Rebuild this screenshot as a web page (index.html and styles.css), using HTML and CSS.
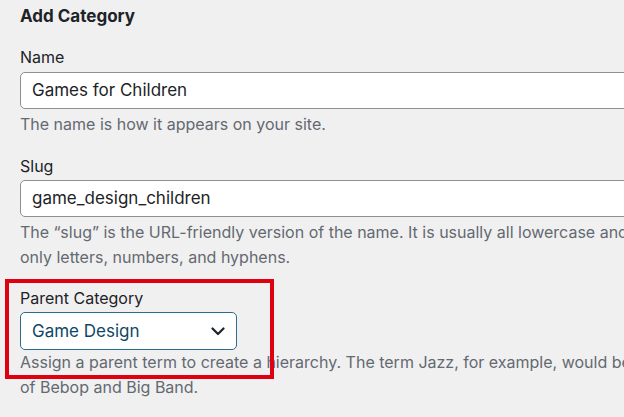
FILE: index.html
```
<!DOCTYPE html>
<html lang="en">
<head>
<meta charset="utf-8">
<title>Add Category</title>
<link rel="stylesheet" href="styles.css">
</head>
<body>
<div class="form">
  <h2 class="title">Add Category</h2>
  <div class="field field-name">
    <div class="label">Name</div>
    <div class="input">Games for Children</div>
    <p class="help">The name is how it appears on your site.</p>
  </div>
  <div class="field field-slug">
    <div class="label">Slug</div>
    <div class="input">game_design_children</div>
    <p class="help">The “slug” is the URL-friendly version of the name. It is usually all lowercase and contains only letters, numbers, and hyphens.</p>
  </div>
  <div class="field field-parent">
    <div class="highlight"></div>
    <div class="label">Parent Category</div>
    <div class="select">
      <span class="select-value">Game Design</span>
      <svg class="chevron" width="14" height="9" viewBox="0 0 14 9"><polyline points="1.5,1.5 7,7 12.5,1.5" fill="none" stroke="#1d2327" stroke-width="2.2" stroke-linecap="round" stroke-linejoin="round"/></svg>
    </div>
    <p class="help">Assign a parent term to create a hierarchy. The term Jazz, for example, would be the parent of Bebop and Big Band.</p>
  </div>
</div>
</body>
</html>
```
FILE: styles.css
```
html, body {
  margin: 0;
  padding: 0;
  overflow: hidden;
  background: #f0f0f1;
}
body {
  font-family: Inter, "Noto Sans", sans-serif;
  color: #1d2327;
}
.form {
  width: 700px;
  padding: 4px 0 0 20px;
}
.title {
  margin: 0;
  font-size: 17px;
  font-weight: 700;
  line-height: 24px;
}
.field {
  position: relative;
}
.field-name { margin-top: 17px; }
.field-slug { margin-top: 17px; }
.field-parent { margin-top: 16px; }
.label {
  font-size: 16px;
  line-height: 24px;
}
.input {
  margin-top: 3px;
  height: 37px;
  box-sizing: border-box;
  width: 100%;
  background: #fff;
  border: 1px solid #8c8f94;
  border-radius: 5px;
  padding: 0 11px;
  font-size: 17px;
  line-height: 35px;
  color: #1d2327;
}
.field-slug .input { margin-top: 2px; }
.help {
  margin: 3px 0 0;
  font-size: 16px;
  line-height: 25px;
  color: #646970;
}
.select {
  margin-top: 2px;
  width: 217px;
  height: 38px;
  box-sizing: border-box;
  border: 1.5px solid #2b6d8e;
  border-radius: 5px;
  background: #fff;
  display: flex;
  align-items: center;
  justify-content: space-between;
  padding: 0 11px 0 11px;
  font-size: 17px;
  color: #0f4866;
}
.chevron { display: block; }
.field-parent .help { margin-top: 0; }
.highlight {
  position: absolute;
  left: -15px;
  top: -7px;
  width: 261px;
  height: 92px;
  border: 4px solid #df0010;
  pointer-events: none;
}
```
